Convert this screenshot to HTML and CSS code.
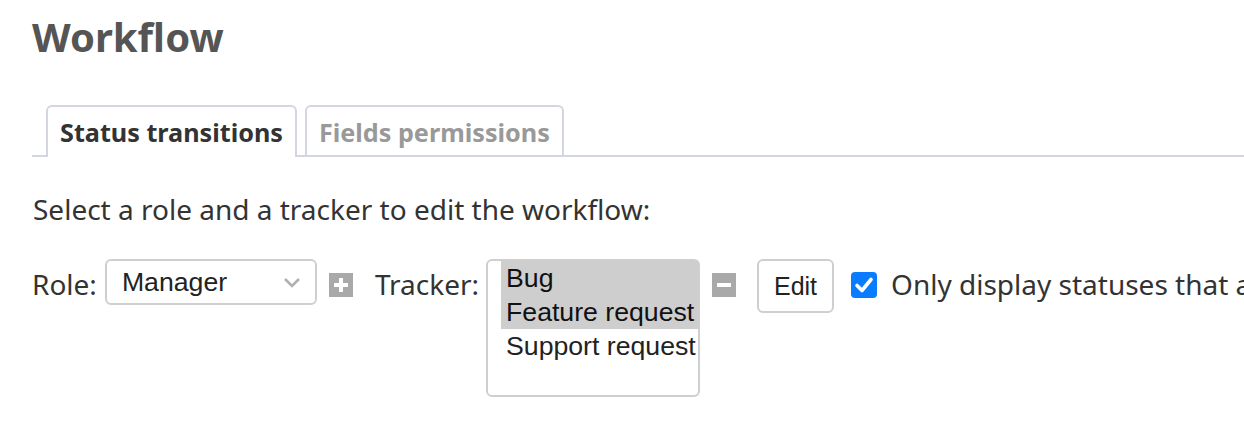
FILE: index.html
```html
<!DOCTYPE html>
<html>
<head>
<meta charset="utf-8">
<link rel="stylesheet" href="styles.css">
</head>
<body>
<div class="content">
  <h2 class="title">Workflow</h2>
  <div class="tabs">
    <ul class="tab-list">
      <li class="tab tab-selected">Status transitions</li>
      <li class="tab">Fields permissions</li>
    </ul>
  </div>
  <p class="intro">Select a role and a tracker to edit the workflow:</p>
  <form class="filters">
    <label class="lbl" for="role">Role:</label>
    <div class="select-box" id="role">
      <span class="select-value">Manager</span>
      <svg class="chevron" width="18" height="12" viewBox="0 0 18 12"><path d="M2 2 L9 9 L16 2" fill="none" stroke="#b0b0b0" stroke-width="2.6"/></svg>
    </div>
    <span class="toggle-icon">
      <svg width="24" height="24" viewBox="0 0 24 24"><rect width="24" height="24" fill="#a9a9a9"/><rect x="5" y="10" width="14" height="4" fill="#fff"/><rect x="10" y="5" width="4" height="14" fill="#fff"/></svg>
    </span>
    <label class="lbl lbl-tracker">Tracker:</label>
    <div class="listbox">
      <div class="opt opt-sel">Bug</div>
      <div class="opt opt-sel">Feature request</div>
      <div class="opt">Support request</div>
    </div>
    <span class="toggle-icon">
      <svg width="24" height="24" viewBox="0 0 24 24"><rect width="24" height="24" fill="#a9a9a9"/><rect x="5" y="10" width="14" height="4" fill="#fff"/></svg>
    </span>
    <button type="button" class="btn">Edit</button>
    <span class="check">
      <svg width="26" height="26" viewBox="0 0 26 26"><rect width="26" height="26" rx="4" fill="#0a7cff"/><path d="M6 13.5 L11 18.5 L20 7.5" fill="none" stroke="#fff" stroke-width="3.6" stroke-linecap="round" stroke-linejoin="round"/></svg>
    </span>
    <label class="lbl lbl-check">Only display statuses that are used by this tracker</label>
  </form>
</div>
</body>
</html>
```
FILE: styles.css
```css
html, body {
  margin: 0;
  padding: 0;
  background: #fff;
  overflow: hidden;
}
body {
  font-family: "Noto Sans", "Open Sans", sans-serif;
  font-size: 28px;
  color: #333;
  width: 1244px;
  height: 428px;
}
.content {
  padding: 0 0 0 32px;
}
.title {
  margin: 0;
  padding-top: 12px;
  font-size: 40px;
  line-height: 50px;
  font-weight: 700;
  color: #555;
}
.tabs {
  margin-top: 43px;
  border-bottom: 2px solid #d3d6e0;
  height: 50px;
}
.tab-list {
  list-style: none;
  margin: 0;
  padding: 0 0 0 14px;
  display: flex;
  gap: 8px;
}
.tab {
  flex-shrink: 0;
  height: 50px;
  box-sizing: border-box;
  border: 2px solid #d3d6e0;
  border-bottom: none;
  border-radius: 6px 6px 0 0;
  padding: 0 12px;
  font-weight: 700;
  font-size: 25.2px;
  line-height: 50px;
  color: #999;
  background: #fff;
}
.tab-selected {
  color: #333;
  height: 52px;
}
.intro {
  margin: 30px 0 0 1px;
  line-height: 44px;
  white-space: nowrap;
}
.filters {
  margin-top: 28px;
  display: flex;
  align-items: flex-start;
  white-space: nowrap;
}
.filters > * {
  flex-shrink: 0;
}
.lbl {
  line-height: 50px;
}
.select-box {
  margin-left: 8px;
  width: 212px;
  height: 46px;
  box-sizing: border-box;
  border: 2px solid #cfcfcf;
  border-radius: 6px;
  display: flex;
  align-items: center;
  justify-content: space-between;
  padding: 0 14px 0 15px;
  font-family: "Liberation Sans", Arial, sans-serif;
  font-size: 26.67px;
  color: #222;
}
.chevron {
  margin-top: 2px;
}
.toggle-icon {
  margin: 14px 0 0 12px;
  width: 24px;
  height: 24px;
  display: flex;
}
.lbl-tracker {
  margin-left: 22px;
}
.listbox {
  margin-left: 7px;
  width: 214px;
  height: 138px;
  box-sizing: border-box;
  border: 2px solid #cfcfcf;
  border-radius: 6px;
  padding: 0 0 0 13px;
  font-family: "Liberation Sans", Arial, sans-serif;
  font-size: 26.67px;
  color: #222;
}
.opt {
  height: 34px;
  line-height: 34px;
  padding-left: 5px;
}
.opt-sel {
  background: #cecece;
  color: #111;
}
.btn {
  margin-left: 21px;
  width: 77px;
  height: 54px;
  box-sizing: border-box;
  border: 2px solid #cfcfcf;
  border-radius: 6px;
  background: #fff;
  font-family: "Liberation Sans", Arial, sans-serif;
  font-size: 25px;
  color: #222;
  padding: 0;
}
.check {
  margin: 13px 0 0 17px;
  width: 26px;
  height: 26px;
  display: flex;
}
.lbl-check {
  margin-left: 14px;
}
```
